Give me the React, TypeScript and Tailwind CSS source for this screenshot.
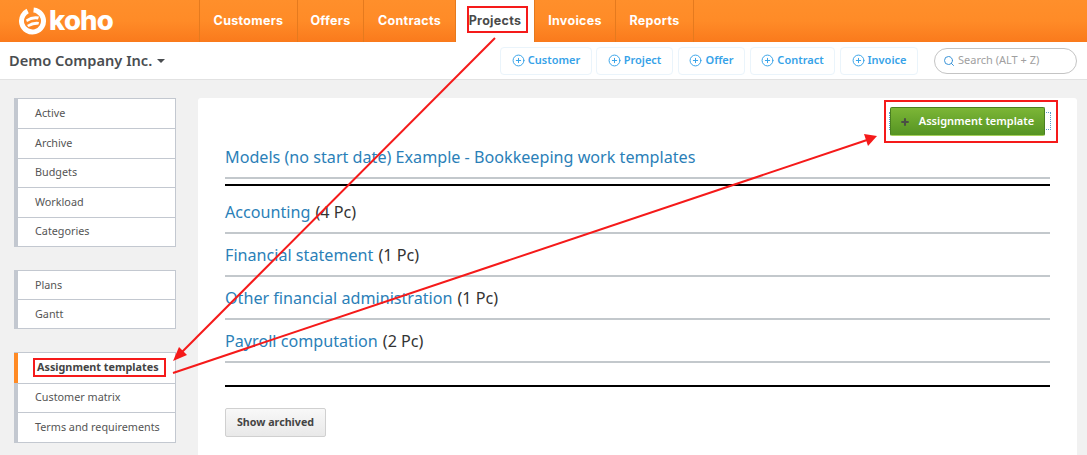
import React from "react";
import { Search, CirclePlus, Plus } from "lucide-react";

const nav: [string, string][] = [
  ["Customers", "w-[98px]"],
  ["Offers", "w-[66px]"],
  ["Contracts", "w-[92px]"],
  ["Projects", "w-[79px]"],
  ["Invoices", "w-[81px]"],
  ["Reports", "w-[78px]"],
];
const actions: [string, string, string][] = [
  ["Customer", "w-[92px]", "ml-[500px]"],
  ["Project", "w-[77px]", "ml-[4px]"],
  ["Offer", "w-[67px]", "ml-[5px]"],
  ["Contract", "w-[85px]", "ml-[5px]"],
  ["Invoice", "w-[78px]", "ml-[5px]"],
];

function Group({ items, active, className, rowClass }: { items: string[]; active?: string; className: string; rowClass: string }) {
  return (
    <div className={"w-[162px] border border-[#c3c8d0] bg-white " + className}>
      {items.map((t, i) => (
        <div
          key={t}
          className={
            "flex items-center pb-[1px] text-[10.8px] border-l-[4px] -ml-px " +
            rowClass +
            " " +
            (i > 0 ? "border-t border-t-[#c3c8d0] " : "") +
            (t === active ? "border-l-[#ff8a24] font-bold text-[#444] pl-[19px]" : "border-l-[#c3c8d0] text-[#555] pl-[17px]")
          }
        >
          {t}
        </div>
      ))}
    </div>
  );
}

function Row({ name, count }: { name: string; count: string }) {
  return (
    <div className="flex h-[43px] items-center border-b-[2px] border-[#c3c8cc] pt-[2px] text-[16.15px] text-[#333]">
      <span className="text-[#2b7fb8]">{name}</span>
      <span className="ml-[5px]">{count}</span>
    </div>
  );
}

export default function App() {
  return (
    <div className="relative h-[455px] w-[1087px] overflow-hidden bg-[#f1f1f1] font-['Noto_Sans',sans-serif]">
      <header className="flex h-[42px] bg-gradient-to-b from-[#ff8f2b] via-[#ff8b27] to-[#fa7a1c]">
        <div className="flex w-[199px] items-center pl-[18px] pb-[1px]">
          <svg width="29" height="28" viewBox="0 0 29 28" fill="none">
            <circle cx="14.5" cy="14" r="11" stroke="white" strokeWidth="5" strokeDasharray="58 6" transform="rotate(-60 14.5 14)" />
            <path d="M8 12.5 Q14 8 21 9.5 L20 12.5 Q14 11.5 9 15Z M9 18 Q15 14 21 15 L20.5 17.5 Q15 17.5 10.500 20Z" fill="white" />
          </svg>
          <span className="ml-[2px] font-['Inter',sans-serif] text-[27.5px] leading-none font-extrabold tracking-[-0.8px] text-white">koho</span>
        </div>
        <nav className="flex h-full border-l border-[#e57a1e]">
          {nav.map(([t, w]) => (
            <div
              key={t}
              className={
                "flex h-full items-center justify-center border-r border-[#e57a1e] font-['Inter',sans-serif] text-[12.5px] tracking-[0.3px] font-bold " +
                w +
                (t === "Projects" ? " bg-white text-[#4a4a4a]" : " text-white")
              }
            >
              {t}
            </div>
          ))}
        </nav>
      </header>

      <div className="relative flex h-[38px] items-center border-b border-[#e2e2e2] bg-white">
        <div className="absolute left-[9px] top-[8px] flex items-center text-[14.6px] leading-[20px] font-semibold text-[#4a4d50]">
          Demo Company Inc.
          <span className="ml-[5px] mt-[2px] h-0 w-0 border-x-[4px] border-t-[4px] border-x-transparent border-t-[#4a4d50]" />
        </div>
        {actions.map(([t, w, m]) => (
          <div
            key={t}
            className={
              "flex h-[28px] items-center justify-center gap-[3px] rounded-[4px] border border-[#eaf4fb] text-[11px] font-semibold text-[#36a2e8] " + w + " " + m
            }
          >
            <CirclePlus size={13} strokeWidth={1.8} />
            {t}
          </div>
        ))}
        <div className="ml-[16px] flex h-[26px] w-[143px] items-center rounded-full border border-[#c4c4c4] pl-[8px] text-[11px] text-[#a0a0a0]">
          <Search size={12} strokeWidth={2} className="text-[#3a94d8]" />
          <span className="ml-[3px] mb-[1px]">Search (ALT + Z)</span>
        </div>
      </div>

      <div className="flex pt-[18px] pl-[14px]">
        <aside className="w-[184px] shrink-0">
          <Group items={["Active", "Archive", "Budgets", "Workload", "Categories"]} rowClass="h-[29.4px]" className="" />
          <Group items={["Plans", "Gantt"]} rowClass="h-[28.5px]" className="mt-[23px]" />
          <Group items={["Assignment templates", "Customer matrix", "Terms and requirements"]} rowClass="h-[29.6px]" active="Assignment templates" className="mt-[23px]" />
        </aside>
        <main className="h-[400px] w-[879px] rounded-[3px] bg-white pl-[27px] pr-[27px]">
          <div className="flex h-[81px] items-end border-b-[2px] border-[#c3c8cc] pb-[8px] text-[16.15px] text-[#2b7fb8]">
            Models (no start date) Example - Bookkeeping work templates
          </div>
          <div className="mt-[5px] h-[2px] bg-black" />
          <div className="pt-[5px]">
            <Row name="Accounting" count="(4 Pc)" />
            <Row name="Financial statement" count="(1 Pc)" />
            <Row name="Other financial administration" count="(1 Pc)" />
            <Row name="Payroll computation" count="(2 Pc)" />
          </div>
          <div className="mt-[22px] h-[2px] bg-black" />
          <button className="mt-[21px] flex h-[29px] w-[101px] items-center justify-center rounded-[2px] border border-[#d0d0d0] bg-gradient-to-b from-[#f8f8f8] to-[#e9e9e9] text-[10.7px] font-bold text-[#444]">
            Show archived
          </button>
        </main>
      </div>

      <div className="absolute left-[889px] top-[112px] h-[18px] w-[162px] border border-dotted border-[#5a9bc8]" />
      <button className="absolute left-[890px] top-[107px] flex h-[29px] w-[155px] items-center justify-center rounded-[2px] border border-[#4a7f22] border-b-[#a6d05a] bg-gradient-to-b from-[#7cb636] to-[#559423] text-[11px] font-semibold text-white">
        <Plus size={10} strokeWidth={5} className="mr-[9px] -ml-[1px] text-[#4b4f45]" />
        Assignment template
      </button>
      <div className="absolute left-[467px] top-[6px] h-[27px] w-[61px] border-[2px] border-[#f51a1a] bg-transparent" />
      <div className="absolute left-[33px] top-[358px] h-[19px] w-[133px] border-[2px] border-[#f51a1a]" />
      <div className="absolute left-[884px] top-[100px] h-[43px] w-[174px] border-[2px] border-[#f51a1a]" />
      <svg className="absolute left-0 top-0" width="1087" height="455" viewBox="0 0 1087 455" fill="none">
        <line x1="495" y1="38" x2="178" y2="356" stroke="#f51a1a" strokeWidth="2" />
        <polygon points="173,361 179,347 187,355" fill="#f51a1a" />
        <line x1="173" y1="373" x2="870" y2="139" stroke="#f51a1a" strokeWidth="2" />
        <polygon points="877,136 864,134 868,146" fill="#f51a1a" />
      </svg>
    </div>
  );
}
